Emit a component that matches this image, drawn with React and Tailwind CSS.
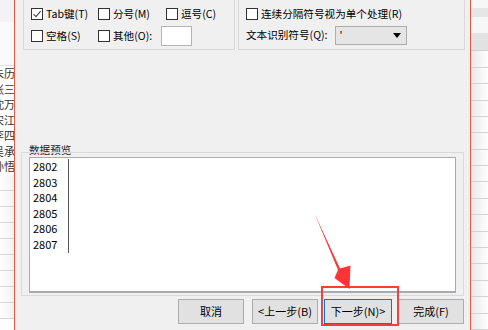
import React from 'react';

const font = { fontFamily: '"Noto Sans CJK SC", "Noto Sans", sans-serif' };

const names = ['朱历', '张三', '沈万', '宋江', '李四', '吴承', '孙悟'];
const rows = ['2802', '2803', '2804', '2805', '2806', '2807'];

function Check({ checked }) {
  return (
    <span className="flex h-[12px] w-[12px] shrink-0 items-center justify-center border border-[#333] bg-white">
      {checked && (
        <svg width="10" height="10" viewBox="0 0 10 10">
          <path d="M1.5 5.2 L4 7.6 L8.6 2.2" fill="none" stroke="#444" strokeWidth="1.1" />
        </svg>
      )}
    </span>
  );
}

function Opt({ checked, label }) {
  return (
    <div className="flex items-center gap-[3px]">
      <Check checked={checked} />
      <span>{label}</span>
    </div>
  );
}

function Btn({ children, focus, className = '' }) {
  return (
    <button
      className={
        'flex h-[25px] w-[66px] items-center justify-center bg-[#e1e1e1] text-[11px] text-black ' +
        (focus ? 'border border-[#0078d7] ' : 'border border-[#adadad] ') +
        className
      }
    >
      {children}
    </button>
  );
}

export default function App() {
  return (
    <div className="relative flex h-[330px] w-[488px] overflow-hidden bg-white text-[10.6px] text-black" style={font}>
      {/* sheet behind, left side */}
      <div className="flex w-[14px] shrink-0 flex-col bg-white">
        <div className="h-[22px] bg-[#f3f3f3]" />
        <div className="h-[44px] border-b border-[#e2e2e2] bg-[#fafafa]" />
        {names.map((n) => (
          <div key={n} className="h-[15.5px] overflow-hidden whitespace-nowrap text-[11px] leading-[15px] text-[#333]">
            <span className="-ml-[7px]">{n}</span>
          </div>
        ))}
        {Array.from({ length: 9 }).map((_, i) => (
          <div key={i} className="h-[16px] shrink-0 border-b border-[#d6d6d6] bg-gradient-to-r from-white to-[#f2f2f2]" />
        ))}
      </div>
      <div className="w-px shrink-0 bg-[#f0533f]" />

      {/* dialog */}
      <div className="flex w-[455px] shrink-0 flex-col bg-[#f0f0f0]">
        <div className="flex h-[50px]">
          <div className="ml-[8px] w-[212px] border-x border-b border-[#d9d9d9] pl-[7px]">
            <div className="grid grid-cols-[67px_68px_auto] items-center pt-[6px]">
              <Opt checked label="Tab键(T)" />
              <Opt label="分号(M)" />
              <Opt label="逗号(C)" />
            </div>
            <div className="mt-[4px] grid grid-cols-[67px_auto] items-center">
              <Opt label="空格(S)" />
              <div className="flex items-center">
                <Opt label="其他(O):" />
                <div className="ml-[9px] h-[20px] w-[31px] border border-[#b4b4b4] bg-white" />
              </div>
            </div>
          </div>
          <div className="ml-[3px] w-[227px] border-x border-b border-[#d9d9d9] pl-[7px]">
            <div className="pt-[6px]">
              <Opt label="连续分隔符号视为单个处理(R)" />
            </div>
            <div className="mt-[4px] flex items-center">
              <span>文本识别符号(Q):</span>
              <div className="ml-[7px] flex h-[19px] w-[72px] items-center justify-between border border-[#adadad] bg-[#e5e5e5] pl-[4px] pr-[5px]">
                <span className="leading-none">'</span>
                <svg width="8" height="5" viewBox="0 0 8 5">
                  <path d="M0 0 H8 L4 5 Z" fill="#000" />
                </svg>
              </div>
            </div>
          </div>
        </div>

        <div className="h-[95px]" />

        {/* preview group */}
        <div className="flex flex-col">
          <span className="ml-[14px] h-[10px] leading-[10px] text-[#222]">数据预览</span>
          <div className="-mt-[3px] ml-[6px] h-[144px] w-[443px] border border-[#d9d9d9] px-[7px] pt-[4px] pb-[2px]">
            <div className="relative h-full border border-b-2 border-[#a9a9b0] bg-white pl-[3px] pt-[1px] text-[11px]">
              {rows.map((r) => (
                <div key={r} className="h-[15.5px] leading-[15.5px]">{r}</div>
              ))}
              <div className="absolute left-[38px] top-[1px] h-[94px] w-px bg-[#555]" />
            </div>
          </div>
        </div>

        <div className="mt-[3px] flex">
          <Btn className="ml-[163px]">取消</Btn>
          <Btn className="ml-[8px]">&lt;上一步(B)</Btn>
          <Btn focus className="ml-[6px] w-[68px]">下一步(N)&gt;</Btn>
          <Btn className="ml-[6px]">完成(F)</Btn>
        </div>
      </div>

      <div className="w-px shrink-0 bg-[#f0533f]" />
      {/* sheet behind, right side */}
      <div className="flex flex-1 flex-col bg-white">
        <div className="h-[10px] bg-[#f7f7f7]" />
        <div className="h-[12px] bg-[#e6e6e6]" />
        <div className="h-[20px] bg-[#f7f7f7]" />
        <div className="h-[23px] border-b border-[#cfcfcf] bg-[#e2e2e2]" />
        {Array.from({ length: 17 }).map((_, i) => (
          <div key={i} className="h-[16.4px] shrink-0 border-b border-[#d2d2d2] bg-gradient-to-r from-[#e8e8e8] to-white" />
        ))}
      </div>

      {/* annotation */}
      <div className="absolute left-[321px] top-[286px] h-[40px] w-[78px] border-2 border-[#ff3b3b]" />
      <svg className="absolute left-0 top-0" width="488" height="330" viewBox="0 0 488 330">
        <path d="M314.5 213.5 L340 268.5 L350.5 265.5 L349.5 289 L334.5 278 L338 270 Z" fill="#ff3535" />
      </svg>
    </div>
  );
}
